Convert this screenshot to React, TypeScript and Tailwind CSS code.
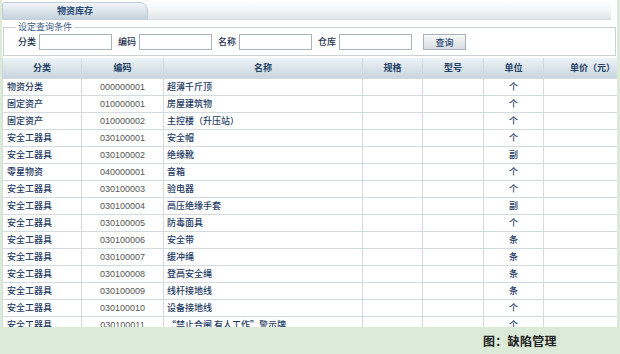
import React from "react";

const rows: [string, string, string, string][] = [
  ["物资分类", "000000001", "超薄千斤顶", "个"],
  ["固定资产", "010000001", "房屋建筑物", "个"],
  ["固定资产", "010000002", "主控楼（升压站）", "个"],
  ["安全工器具", "030100001", "安全帽", "个"],
  ["安全工器具", "030100002", "绝缘靴", "副"],
  ["零星物资", "040000001", "音箱", "个"],
  ["安全工器具", "030100003", "验电器", "个"],
  ["安全工器具", "030100004", "高压绝缘手套", "副"],
  ["安全工器具", "030100005", "防毒面具", "个"],
  ["安全工器具", "030100006", "安全带", "条"],
  ["安全工器具", "030100007", "缓冲绳", "条"],
  ["安全工器具", "030100008", "登高安全绳", "条"],
  ["安全工器具", "030100009", "线杆接地线", "条"],
  ["安全工器具", "030100010", "设备接地线", "个"],
  ["安全工器具", "030100011", "“禁止合闸 有人工作”警示牌", "个"],
];

const cjk = { fontFamily: '"Noto Sans CJK SC", "Noto Sans", sans-serif' };

function Field({ label }: { label: string }) {
  return (
    <div className="flex items-center gap-[3px]">
      <span className="text-[9px] font-medium text-[#1d2f4c]">{label}</span>
      <div className="w-[73px] h-[16px] border border-[#a9b3bb] bg-white" />
    </div>
  );
}

export default function App() {
  const headers = ["分类", "编码", "名称", "规格", "型号", "单位", "单价（元）"];
  return (
    <div className="w-[620px] h-[354px] bg-[#dcead8] overflow-hidden flex flex-col" style={cjk}>
      <div className="ml-[2px] mr-[3px] h-[327px] bg-white overflow-hidden flex flex-col">
        {/* top tab strip */}
        <div className="flex h-[20px] shrink-0">
          <div className="w-[146px] mt-[2px] rounded-tr-[8px] rounded-tl-[2px] bg-gradient-to-b from-[#f1f5f8] to-[#c6d3dd] border border-[#c2ccd4] flex items-center justify-center">
            <span className="text-[9px] font-bold text-[#2c4a74]">物资库存</span>
          </div>
          <div className="flex-1 mr-[6px] bg-gradient-to-b from-white via-[#f4f6f7] to-[#e2e6e8] border-b border-[#d4dadd]" />
        </div>

        {/* query conditions */}
        <fieldset className="mx-[1px] mt-[1px] border border-[#c9d1d6] pl-[14px] pr-2 pb-[5px] pt-[1px] shrink-0">
          <legend className="px-[2px] -ml-[2px] text-[9px] text-[#3b5a86] leading-[12px]">设定查询条件</legend>
          <div className="flex items-center gap-[6px]">
            <Field label="分类" />
            <Field label="编码" />
            <Field label="名称" />
            <Field label="仓库" />
            <button className="ml-[5px] w-[43px] h-[16px] border border-[#a8b2b8] bg-gradient-to-b from-[#f7f9fa] to-[#d7dde1] text-[9px] font-medium text-[#2c4a74] leading-none">
              查询
            </button>
          </div>
        </fieldset>

        {/* table */}
        <table className="mt-[2px] table-fixed border-collapse w-[615px]">
          <colgroup>
            <col className="w-[79px]" />
            <col className="w-[82px]" />
            <col className="w-[199px]" />
            <col className="w-[60px]" />
            <col className="w-[61px]" />
            <col className="w-[60px]" />
            <col className="w-[74px]" />
          </colgroup>
          <thead>
            <tr className="h-[20px] bg-gradient-to-b from-[#eef3f6] to-[#c9d5de]">
              {headers.map((h, i) => (
                <th
                  key={h}
                  className={
                    "border-x border-[#cfd8de] text-[9px] font-bold text-[#243f66] p-0 " +
                    (i === 6 ? "text-right pr-[2px]" : "text-center")
                  }
                >
                  {h}
                </th>
              ))}
            </tr>
          </thead>
          <tbody>
            {rows.map((r, i) => (
              <tr key={i} className="h-[17px]">
                <td className="border border-[#d3dbe0] pl-[4px] text-[9px] font-medium text-[#1e3a62] p-0 whitespace-nowrap">{r[0]}</td>
                <td
                  className="border border-[#d3dbe0] text-center text-[9px] text-[#555] p-0 pt-[2px]"
                  style={{ fontFamily: '"Liberation Sans", Arial, sans-serif' }}
                >
                  {r[1]}
                </td>
                <td className="border border-[#d3dbe0] pl-[3px] text-[9px] font-medium text-[#1e3a62] p-0 whitespace-nowrap">{r[2]}</td>
                <td className="border border-[#d3dbe0] p-0" />
                <td className="border border-[#d3dbe0] p-0" />
                <td className="border border-[#d3dbe0] text-center text-[9px] font-medium text-[#1e3a62] p-0">{r[3]}</td>
                <td className="border border-[#d3dbe0] p-0" />
              </tr>
            ))}
          </tbody>
        </table>
      </div>

      <div className="flex-1 flex items-center pl-[483px]">
        <span className="text-[12px] font-bold text-[#222] tracking-[0.3px]">图：缺陷管理</span>
      </div>
    </div>
  );
}
